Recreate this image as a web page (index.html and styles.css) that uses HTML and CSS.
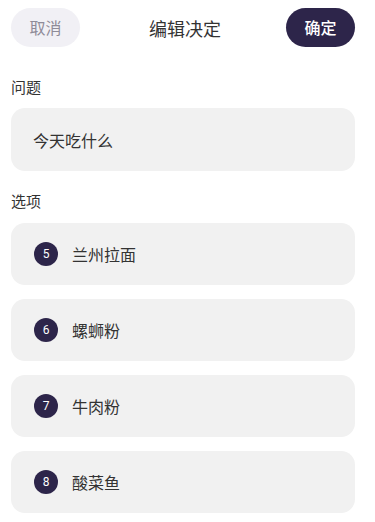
FILE: index.html
```html
<!DOCTYPE html>
<html lang="zh">
<head>
<meta charset="utf-8">
<link rel="stylesheet" href="styles.css">
</head>
<body>
<div class="page">
  <header class="topbar">
    <button class="btn btn-cancel">取消</button>
    <div class="title">编辑决定</div>
    <button class="btn btn-ok">确定</button>
  </header>
  <div class="label">问题</div>
  <div class="field">今天吃什么</div>
  <div class="label">选项</div>
  <div class="options">
    <div class="option"><span class="num">5</span><span class="text">兰州拉面</span></div>
    <div class="option"><span class="num">6</span><span class="text">螺蛳粉</span></div>
    <div class="option"><span class="num">7</span><span class="text">牛肉粉</span></div>
    <div class="option"><span class="num">8</span><span class="text">酸菜鱼</span></div>
  </div>
</div>
</body>
</html>
```
FILE: styles.css
```css
* { box-sizing: border-box; }
html, body { margin: 0; padding: 0; background: #ffffff; }
body {
  font-family: "Noto Sans CJK SC", "Noto Sans", sans-serif;
  color: #333333;
}
.page {
  width: 344px;
  margin-left: 11px;
  padding-top: 8px;
}
.topbar {
  display: flex;
  align-items: center;
  justify-content: space-between;
  height: 39px;
}
.btn {
  border: none;
  height: 39px;
  width: 69px;
  border-radius: 20px;
  font-family: inherit;
  font-size: 16px;
  padding: 0;
  line-height: 39px;
}
.btn-cancel {
  background: #f1f0f5;
  color: #8f8b98;
}
.btn-ok {
  background: #2d254a;
  color: #ffffff;
  font-weight: 500;
}
.title {
  font-size: 18px;
  color: #333333;
  margin-left: 4px;
}
.label {
  font-size: 15px;
  line-height: 22px;
  color: #333333;
  margin-top: 29px;
  margin-bottom: 10px;
}
.field {
  height: 63px;
  border-radius: 14px;
  background: #f1f1f1;
  display: flex;
  align-items: center;
  padding-left: 22px;
  font-size: 16px;
  color: #333333;
}
.field + .label { margin-top: 19px; margin-bottom: 11px; }
.options {
  display: flex;
  flex-direction: column;
  gap: 14px;
}
.option {
  height: 62px;
  border-radius: 14px;
  background: #f1f1f1;
  display: flex;
  align-items: center;
  padding-left: 23px;
}
.num {
  width: 24px;
  height: 24px;
  border-radius: 50%;
  background: #2d254a;
  color: #ffffff;
  font-family: "Roboto", "Noto Sans", sans-serif;
  font-size: 12px;
  display: flex;
  align-items: center;
  justify-content: center;
  margin-right: 14px;
}
.text {
  font-size: 16px;
  color: #333333;
}
```
